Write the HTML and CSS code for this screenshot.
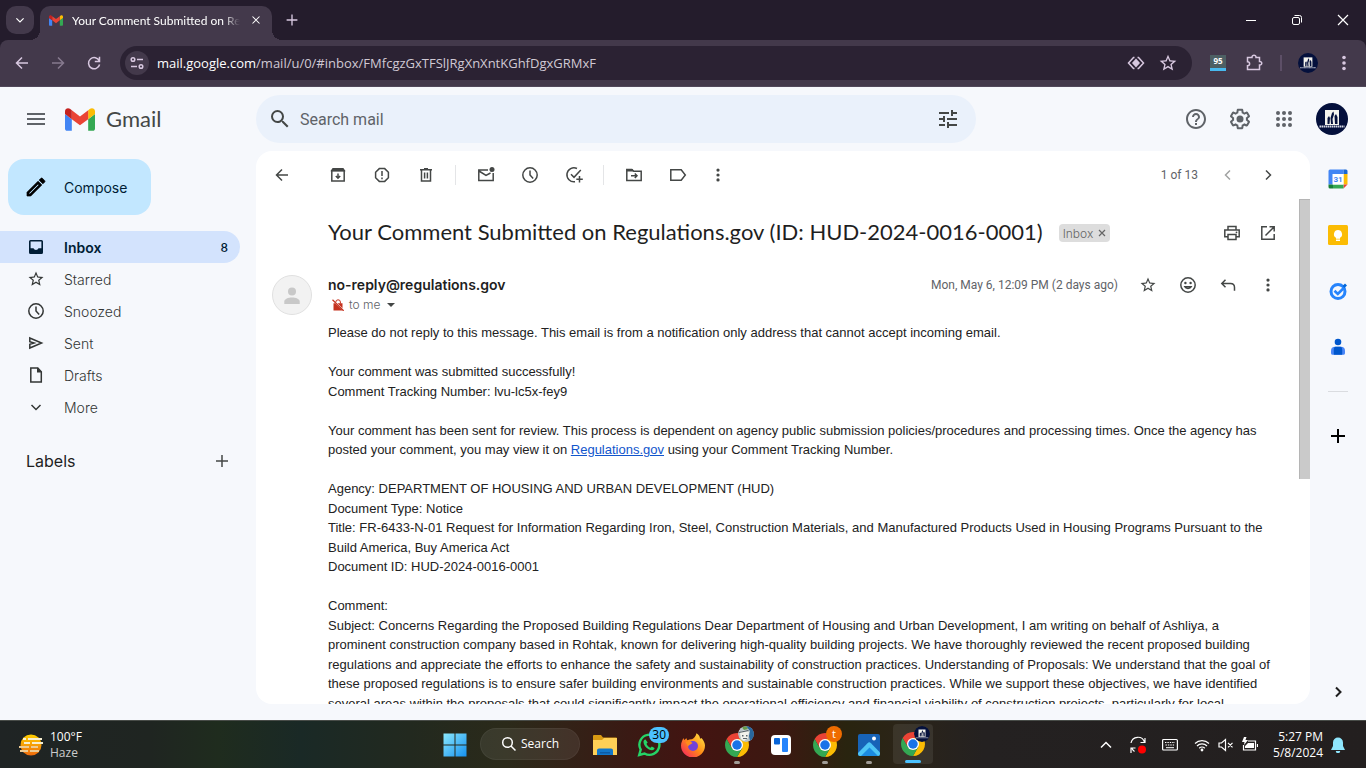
FILE: index.html
```html
<!DOCTYPE html>
<html lang="en">
<head>
<meta charset="utf-8">
<title>Your Comment Submitted on Regulations.gov - Gmail</title>
<link rel="stylesheet" href="styles.css">
</head>
<body>
<svg class="defs" aria-hidden="true">
  <symbol id="gmail" viewBox="52 42 88 66">
    <path fill="#4285f4" d="M58 108h14V74L52 59v43c0 3.32 2.69 6 6 6"/>
    <path fill="#34a853" d="M120 108h14c3.32 0 6-2.69 6-6V59l-20 15"/>
    <path fill="#fbbc04" d="M120 48v26l20-15v-8c0-7.42-8.47-11.65-14.4-7.2"/>
    <path fill="#ea4335" d="M72 74V48l24 18 24-18v26L96 92"/>
    <path fill="#c5221f" d="M52 51v8l20 15V48l-5.6-4.2c-5.94-4.45-14.4-.22-14.4 7.2"/>
  </symbol>
  <symbol id="star" viewBox="0 0 24 24"><path d="M22 9.24l-7.19-.62L12 2 9.19 8.63 2 9.24l5.46 4.73L5.82 21 12 17.27 18.18 21l-1.63-7.03L22 9.24zM12 15.4l-3.76 2.27 1-4.28-3.32-2.88 4.38-.38L12 6.1l1.71 4.04 4.38.38-3.32 2.88 1 4.28L12 15.4z"/></symbol>
  <symbol id="clock" viewBox="0 0 20 20"><g class="ln"><circle cx="10" cy="10" r="7.2"/><path d="M10 5.5V10l3.2 3.4"/></g></symbol>
  <symbol id="dots" viewBox="0 0 20 20"><circle cx="10" cy="4.500" r="1.800"/><circle cx="10" cy="10" r="1.800"/><circle cx="10" cy="15.500" r="1.800"/></symbol>
  <symbol id="back" viewBox="0 0 20 20"><path class="ln" d="M16 10H5M10 4.5L4.5 10l5.500 5.500"/></symbol>
  <symbol id="left" viewBox="0 0 20 20"><path class="ln" d="M12 5.500L7.500 10l4.500 4.500"/></symbol>
  <symbol id="right" viewBox="0 0 20 20"><path class="ln" d="M8 5.500l4.500 4.500L8 14.500"/></symbol>
  <symbol id="down" viewBox="0 0 20 20"><path class="ln" d="M5.500 8l4.500 4.500L14.500 8"/></symbol>
  <symbol id="plus" viewBox="0 0 20 20"><path class="ln" d="M10 4v12M4 10h12"/></symbol>
  <symbol id="close" viewBox="0 0 20 20"><path class="ln" d="M5 5l10 10M15 5L5 15"/></symbol>
  <symbol id="brand" viewBox="0 0 32 32">
    <circle cx="16" cy="16" r="16" fill="#04103c"/>
    <path fill="#f4f4ee" d="M9 7h14v15H9z"/>
    <path fill="#04103c" d="M11.500 21v-6l1.500-2 1 2-.5 6zM15 21l-.5-6 1.500-5 1.500-1.500.5 3-1.500 4.500.5 5zM19 21l-.5-8 1.500-2 1.500 3v7z"/>
    <path d="M3.500 23.500h25" stroke="#d5d8e4" stroke-width="1.800" stroke-dasharray="1.500 .5"/>
  </symbol>
  <symbol id="chrome" viewBox="0 0 48 48">
    <path fill="#ea4335" d="M3.220 12a24 24 0 0 1 41.560 0H24L13.600 30z"/>
    <path fill="#fbbc04" d="M44.780 12A24 24 0 0 1 24 48l10.400-18L24 12z"/>
    <path fill="#34a853" d="M24 48A24 24 0 0 1 3.220 12L13.600 30 24 36l10.400-6z"/>
    <circle cx="24" cy="24" r="12" fill="#fff"/><circle cx="24" cy="24" r="9.500" fill="#1a73e8"/>
  </symbol>
</svg>

<header class="browser">
  <div class="tabstrip">
    <button class="tab-search" aria-label="Search tabs"><svg class="i16 bold"><use href="#down"/></svg></button>
    <div class="tab">
      <svg class="tab-icon"><use href="#gmail"/></svg>
      <span class="tab-title">Your Comment Submitted on Regulations.gov</span>
      <button aria-label="Close tab"><svg class="i14"><use href="#close"/></svg></button>
    </div>
    <button class="new-tab" aria-label="New tab"><svg class="i18"><use href="#plus"/></svg></button>
    <div class="window-controls">
      <button aria-label="Minimize"><svg class="i12" viewBox="0 0 12 12"><path d="M1 6.500h10" stroke="#fff"/></svg></button>
      <button aria-label="Restore"><svg class="i12" viewBox="0 0 12 12"><g fill="none" stroke="#fff"><rect x="1.500" y="3.500" width="7" height="7" rx="1.500"/><path d="M3.500 1.500H8.500a2 2 0 0 1 2 2v5"/></g></svg></button>
      <button aria-label="Close"><svg class="i12" viewBox="0 0 12 12"><path fill="none" stroke="#fff" stroke-width="1.200" d="M1 1l10 10M11 1L1 11"/></svg></button>
    </div>
  </div>
  <div class="toolbar">
    <button aria-label="Back"><svg class="i20"><use href="#back"/></svg></button>
    <button class="dim" aria-label="Forward"><svg class="i20 flip"><use href="#back"/></svg></button>
    <button aria-label="Reload"><svg class="i20" viewBox="0 0 20 20"><path class="ln" d="M15.300 8A5.600 5.600 0 1 0 15.600 11.500M15.500 3.800v4.700h-4.700"/></svg></button>
    <div class="omnibox">
      <button class="site-info" aria-label="Site information"><svg class="i16" viewBox="0 0 16 16"><g class="ln"><circle cx="4" cy="4.500" r="1.800"/><path d="M8 4.500h6M2 11.500h6"/><circle cx="12" cy="11.500" r="1.800"/></g></svg></button>
      <p class="url"><b>mail.google.com</b>/mail/u/0/#inbox/FMfcgzGxTFSlJRgXnXntKGhfDgxGRMxF</p>
      <button aria-label="Reading mode"><svg class="i18" viewBox="0 0 18 18"><path d="M9 4.500l4 4.500-4 4.500L5 9z"/><path class="ln" d="M7.500 3.500h-1L1.500 9l5 5.500h1M10.500 3.500h1l5 5.500-5 5.500h-1"/></svg></button>
      <button aria-label="Bookmark"><svg class="i20"><use href="#star"/></svg></button>
    </div>
    <button class="ext" aria-label="Extension"><span class="score">95</span></button>
    <button class="ext-menu" aria-label="Extensions"><svg class="i20" viewBox="0 0 20 20"><path class="ln" d="M4.500 4.500h3.500c-.3-3 4.300-3 4 0h3.500v4c3-.3 3 3.800 0 3.500v4.500h-12v-3.800c2.800 0 2.800-4 0-4V4.500z"/></svg></button>
    <span class="sep"></span>
    <button class="profile" aria-label="Profile"><svg class="i20"><use href="#brand"/></svg></button>
    <button class="menu" aria-label="Chrome menu"><svg class="i20"><use href="#dots"/></svg></button>
  </div>
</header>

<div class="app">
  <header class="topbar">
    <div class="logo-area">
      <button aria-label="Main menu"><svg class="i24" viewBox="0 0 24 24"><path d="M3 18h18v-2H3v2zm0-5h18v-2H3v2zm0-7v2h18V6H3z"/></svg></button>
      <a class="logo" href="#"><svg class="gmail-logo"><use href="#gmail"/></svg>Gmail</a>
    </div>
    <form class="search">
      <button type="button" aria-label="Search"><svg class="i24" viewBox="0 0 24 24"><path d="M15.500 14h-.79l-.28-.27A6.471 6.471 0 0 0 16 9.500 6.500 6.500 0 1 0 9.500 16c1.610 0 3.090-.59 4.230-1.570l.27.28v.79l5 4.990L20.490 19l-4.990-5zm-6 0C7.010 14 5 11.990 5 9.500S7.010 5 9.500 5 14 7.010 14 9.500 11.990 14 9.500 14z"/></svg></button>
      <input type="text" placeholder="Search mail" aria-label="Search mail">
      <button type="button" aria-label="Search options"><svg class="i24" viewBox="0 0 24 24"><path d="M3 17v2h6v-2H3zM3 5v2h10V5H3zm10 16v-2h8v-2h-8v-2h-2v6h2zM7 9v2H3v2h4v2h2V9H7zm14 4v-2H11v2h10zm-6-4h2V7h4V5h-4V3h-2v6z"/></svg></button>
    </form>
    <div class="account">
      <button aria-label="Support"><svg class="i24" viewBox="0 0 24 24"><path d="M11 18h2v-2h-2v2zm1-16C6.480 2 2 6.480 2 12s4.480 10 10 10 10-4.480 10-10S17.520 2 12 2zm0 18c-4.410 0-8-3.590-8-8s3.590-8 8-8 8 3.590 8 8-3.590 8-8 8zm0-14c-2.210 0-4 1.790-4 4h2c0-1.100.9-2 2-2s2 .9 2 2c0 2-3 1.750-3 5h2c0-2.250 3-2.500 3-5 0-2.210-1.790-4-4-4z"/></svg></button>
      <button aria-label="Settings"><svg class="i24" viewBox="0 0 24 24"><path d="M13.850 22.250h-3.700c-.74 0-1.360-.54-1.450-1.270l-.27-1.890c-.27-.14-.53-.29-.79-.46l-1.800.72c-.7.26-1.470-.03-1.810-.65L2.200 15.530c-.35-.66-.2-1.440.36-1.880l1.530-1.190c-.01-.15-.02-.3-.02-.46 0-.15.01-.31.02-.46l-1.520-1.190c-.59-.45-.74-1.260-.37-1.880l1.850-3.190c.34-.62 1.110-.9 1.790-.63l1.810.73c.26-.17.52-.32.78-.46l.27-1.910c.09-.7.71-1.250 1.440-1.250h3.700c.74 0 1.360.54 1.450 1.270l.27 1.890c.27.14.53.29.79.46l1.800-.72c.71-.26 1.480.03 1.820.65l1.840 3.180c.36.66.2 1.440-.36 1.880l-1.520 1.190c.01.15.02.3.02.46s-.01.31-.02.46l1.520 1.190c.56.45.72 1.230.37 1.860l-1.860 3.220c-.34.62-1.110.9-1.800.63l-1.800-.72c-.26.17-.52.32-.78.46l-.27 1.910c-.1.68-.72 1.220-1.460 1.220zm-3.230-2h2.760l.37-2.550.53-.22c.44-.18.88-.44 1.340-.78l.45-.34 2.380.96 1.380-2.400-2.030-1.580.07-.56c.03-.26.06-.51.06-.78s-.03-.53-.06-.78l-.07-.56 2.030-1.580-1.390-2.400-2.390.96-.45-.35c-.42-.32-.87-.58-1.330-.77l-.52-.22-.37-2.550h-2.760l-.37 2.550-.53.21c-.44.19-.88.44-1.340.79l-.45.33-2.380-.95-1.390 2.390 2.030 1.580-.07.56a7 7 0 0 0-.06.79c0 .26.02.53.06.78l.07.56-2.030 1.580 1.380 2.400 2.390-.96.45.35c.43.33.86.58 1.330.77l.53.22.38 2.550z"/><circle cx="12" cy="12" r="3.500"/></svg></button>
      <button aria-label="Google apps"><svg class="i24" viewBox="0 0 24 24"><circle cx="6" cy="6" r="2"/><circle cx="12" cy="6" r="2"/><circle cx="18" cy="6" r="2"/><circle cx="6" cy="12" r="2"/><circle cx="12" cy="12" r="2"/><circle cx="18" cy="12" r="2"/><circle cx="6" cy="18" r="2"/><circle cx="12" cy="18" r="2"/><circle cx="18" cy="18" r="2"/></svg></button>
      <button class="avatar-btn" aria-label="Google Account"><svg class="i32"><use href="#brand"/></svg></button>
    </div>
  </header>

  <div class="columns">
    <aside class="sidebar">
      <button class="compose"><svg class="i24" viewBox="0 0 24 24"><path fill="#000" d="M14.060 9.020l.92.92L5.920 19H5v-.92l9.060-9.060M17.660 3c-.25 0-.51.1-.7.29l-1.830 1.830 3.750 3.750 1.830-1.830c.39-.39.39-1.020 0-1.410l-2.340-2.340c-.2-.2-.45-.29-.71-.29zm-3.600 3.190L3 17.250V21h3.750L17.810 9.940l-3.750-3.750z" stroke="#000" stroke-width=".7"/></svg>Compose</button>
      <nav>
        <a class="active" href="#"><svg class="i20" viewBox="0 0 20 20"><path fill-rule="evenodd" d="M4.500 3h11A1.500 1.500 0 0 1 17 4.500v11a1.500 1.500 0 0 1-1.500 1.500h-11A1.500 1.500 0 0 1 3 15.500v-11A1.500 1.500 0 0 1 4.500 3zm.1 1.600V11.300h3c.4 1 1.300 1.600 2.400 1.600s2-.6 2.400-1.600h3V4.600z"/></svg><span>Inbox</span><b>8</b></a>
        <a href="#"><svg class="i18"><use href="#star"/></svg><span>Starred</span></a>
        <a href="#"><svg class="i20"><use href="#clock"/></svg><span>Snoozed</span></a>
        <a href="#"><svg class="i20" viewBox="0 0 20 20"><path class="ln" d="M3.800 5l11.800 5L3.800 15v-3.800L8 10 3.800 8.800z"/></svg><span>Sent</span></a>
        <a href="#"><svg class="i20" viewBox="0 0 20 20"><path class="ln" d="M4.800 3h7L15.300 6.800V17H4.800z"/><path d="M11 2.500V7.500h5z"/></svg><span>Drafts</span></a>
        <a href="#"><svg class="i20"><use href="#down"/></svg><span>More</span></a>
      </nav>
      <div class="labels"><h2>Labels</h2><button aria-label="Create new label"><svg class="i20"><use href="#plus"/></svg></button></div>
    </aside>

    <main class="pane">
      <div class="actions">
        <button class="go-back" aria-label="Back to Inbox"><svg class="i20"><use href="#back"/></svg></button>
        <button aria-label="Archive"><svg class="i20" viewBox="0 0 20 20"><path class="ln" d="M3.800 5.500V16h12.400V5.500M3.800 5.500L5 3.800h10l1.200 1.700zM10 8.500v4.500M7.800 11l2.200 2.200 2.200-2.200"/><path d="M4 4h12v2.500H4z"/></svg></button>
        <button aria-label="Report spam"><svg class="i20" viewBox="0 0 20 20"><path class="ln" d="M7.300 3.600h5.400l3.700 3.700v5.400l-3.700 3.700H7.300l-3.700-3.700V7.300zM10 6v5M10 12.600v1.600"/></svg></button>
        <button aria-label="Delete"><svg class="i20" viewBox="0 0 20 20"><path class="ln" d="M4 4.800h12M8 3.800h4M5.500 5v11h9V5M8.600 7.500v6M11.400 7.500v6"/></svg></button>
        <span class="rule"></span>
        <button aria-label="Mark as unread"><svg class="i20" viewBox="0 0 20 20"><path class="ln" d="M12 5H2.800v10.500h14.400V8M3 6l7 4.500L14.500 8"/><circle cx="16" cy="4.500" r="2.500"/></svg></button>
        <button aria-label="Snooze"><svg class="i20"><use href="#clock"/></svg></button>
        <button aria-label="Add to Tasks"><svg class="i20" viewBox="0 0 20 20"><path class="ln" d="M11 16.700A7 7 0 1 1 13 3.500M7 9.300l3 3 6.800-7.300M15.500 11v6.500M12.300 14.200h6.500"/></svg></button>
        <span class="rule"></span>
        <button aria-label="Move to"><svg class="i20" viewBox="0 0 20 20"><path class="ln" d="M2.800 4.500h5l2 1.800h7.400V15.500H2.800zM7 10.800h6M10.800 8.500l2.200 2.300-2.200 2.300"/><path d="M2.500 4h6l1.500 2.500H2.500z"/></svg></button>
        <button aria-label="Labels"><svg class="i20" viewBox="0 0 20 20"><path class="ln" d="M2.800 4.800h10.400L17.300 10l-4.100 5.200H2.800z"/></svg></button>
        <button class="more" aria-label="More"><svg class="i18"><use href="#dots"/></svg></button>
        <span class="count">1 of 13</span>
        <button class="page dim" aria-label="Newer"><svg class="i20"><use href="#left"/></svg></button>
        <button class="page" aria-label="Older"><svg class="i20 bold-icon"><use href="#right"/></svg></button>
      </div>

      <div class="scroll">
        <article class="thread">
          <div class="subject">
            <h1>Your Comment Submitted on Regulations.gov (ID: HUD-2024-0016-0001)</h1>
            <button class="chip" aria-label="Remove label Inbox">Inbox<svg class="i12" viewBox="0 0 12 12"><path class="ln thin" d="M3 3l6 6M9 3L3 9"/></svg></button>
            <div class="subject-tools">
              <button aria-label="Print all"><svg class="i20" viewBox="0 0 20 20"><path class="ln" d="M6 7V3.500h8V7M5.500 13.800H2.800V7h14.400v6.800h-2.700M6 11.500h8v5H6z"/><circle cx="14.500" cy="9.300" r=".9"/></svg></button>
              <button aria-label="In new window"><svg class="i20" viewBox="0 0 20 20"><path class="ln" d="M9 3.800H3.800v12.400h12.400V11M11.500 3.800h4.700v4.700M16 4L7.500 12.500"/></svg></button>
            </div>
          </div>
          <header class="message-head">
            <svg class="sender-pic" viewBox="0 0 40 40"><circle cx="20" cy="20" r="19.500" fill="#f2f2f2" stroke="#e0e0e0"/><circle cx="20" cy="16.500" r="4" fill="#c8c8c8"/><path d="M12.300 29v-2.500c0-2.500 4-4 7.700-4s7.700 1.500 7.700 4V29z" fill="#c8c8c8"/></svg>
            <div class="who">
              <h3>no-reply@regulations.gov</h3>
              <p><svg class="lock" viewBox="0 0 12 12"><path fill="#c5321f" d="M1.500 4.200H3l8 7.300H1.500zM5.500 4.200h5v5z"/><path d="M3.800 3.200a2.300 2.300 0 0 1 4.600-.2v1.500" fill="none" stroke="#c5321f"/><path d="M.5.800L11.700 11.800" stroke="#c5321f" stroke-width="1.200"/></svg>to me<svg class="caret" viewBox="0 0 8 4"><path d="M0 0h8L4 4z"/></svg></p>
            </div>
            <time>Mon, May 6, 12:09 PM (2 days ago)</time>
            <button aria-label="Star"><svg class="i18"><use href="#star"/></svg></button>
            <button aria-label="Add reaction"><svg class="i20" viewBox="0 0 20 20"><g class="ln"><circle cx="10" cy="10" r="7.200"/><path d="M6.800 11.800h6.400c-1 2.200-5.400 2.200-6.400 0z"/></g><circle cx="7.400" cy="8" r="1.200"/><circle cx="12.600" cy="8" r="1.200"/></svg></button>
            <button aria-label="Reply"><svg class="i20" viewBox="0 0 20 20"><path class="ln" d="M7.500 4.800L3.800 8.500l3.700 3.700M4 8.500h8.500c2.500 0 4 1.500 4 4v3.200"/></svg></button>
            <button aria-label="More"><svg class="i18"><use href="#dots"/></svg></button>
          </header>
          <div class="body">
            <p>Please do not reply to this message. This email is from a notification only address that cannot accept incoming email.</p>
            <p>Your comment was submitted successfully!<br>Comment Tracking Number: lvu-lc5x-fey9</p>
            <p>Your comment has been sent for review. This process is dependent on agency public submission policies/procedures and processing times. Once the agency has posted your comment, you may view it on <a href="#">Regulations.gov</a> using your Comment Tracking Number.</p>
            <p>Agency: DEPARTMENT OF HOUSING AND URBAN DEVELOPMENT (HUD)<br>Document Type: Notice<br>Title: FR-6433-N-01 Request for Information Regarding Iron, Steel, Construction Materials, and Manufactured Products Used in Housing Programs Pursuant to the Build America, Buy America Act<br>Document ID: HUD-2024-0016-0001</p>
            <p>Comment:<br>Subject: Concerns Regarding the Proposed Building Regulations Dear Department of Housing and Urban Development, I am writing on behalf of Ashliya, a prominent construction company based in Rohtak, known for delivering high-quality building projects. We have thoroughly reviewed the recent proposed building regulations and appreciate the efforts to enhance the safety and sustainability of construction practices. Understanding of Proposals: We understand that the goal of these proposed regulations is to ensure safer building environments and sustainable construction practices. While we support these objectives, we have identified several areas within the proposals that could significantly impact the operational efficiency and financial viability of construction projects, particularly for local</p>
          </div>
        </article>
        <div class="track"><div class="thumb"></div></div>
      </div>
    </main>

    <aside class="rail">
      <button aria-label="Calendar"><svg class="i20" viewBox="0 0 20 20"><path fill="#4285f4" d="M2 .5h13.500V5H5v10.500H.5V2A1.500 1.500 0 0 1 2 .5z"/><path fill="#1967d2" d="M15.500.5H18A1.500 1.500 0 0 1 19.500 2v3h-4z"/><path fill="#fbbc04" d="M15.500 5h4v10.500h-4z"/><path fill="#ea4335" d="M15.500 15.500h4l-4 4z"/><path fill="#34a853" d="M5 15.500h10.500v4H5z"/><path fill="#188038" d="M.5 15.500H5v4H2A1.500 1.500 0 0 1 .5 18z"/><path fill="#fff" d="M4.500 5h11v10.500h-11z"/><text x="10" y="13" text-anchor="middle" class="day">31</text></svg></button>
      <button aria-label="Keep"><svg class="i20" viewBox="0 0 20 20"><rect width="20" height="20" rx="1.500" fill="#fbbc04"/><path fill="#fff" d="M10 5a4.200 4.200 0 0 0-2 7.800v1h4v-1A4.200 4.200 0 0 0 10 5zM8 14.500h4V16H8z"/></svg></button>
      <button aria-label="Tasks"><svg class="i20" viewBox="0 0 20 20"><circle cx="10" cy="10.500" r="7" fill="none" stroke="#2684fc" stroke-width="3"/><path d="M6.500 9.800l3.300 3.200 6-6" fill="none" stroke="#2684fc" stroke-width="2.600"/><path d="M14.500 5L17 2.500l2 2L16.500 7z" fill="#0066da"/></svg></button>
      <button aria-label="Contacts"><svg class="i20" viewBox="0 0 20 20"><circle cx="10" cy="5" r="3.300" fill="#0057cc"/><path fill="#4a86f7" d="M7 9.800h6c2.500 0 4 1.600 4 4V16c0 1-.6 1.800-1.500 1.800h-11C3.600 17.800 3 17 3 16v-2.200c0-2.400 1.500-4 4-4z"/><path fill="#0057cc" d="M7.500 9.800h5c1 0 1.700 1.200 1.700 3v5H5.800v-5c0-1.800.7-3 1.700-3z"/></svg></button>
      <hr>
      <button class="black" aria-label="Get add-ons"><svg class="i22" viewBox="0 0 22 22"><path d="M11 4v14M4 11h14" stroke="#000" stroke-width="2"/></svg></button>
      <button class="hide black" aria-label="Hide side panel"><svg class="i20" viewBox="0 0 20 20"><path d="M8 5.500l4.500 4.500L8 14.500" fill="none" stroke="#1f1f1f" stroke-width="2"/></svg></button>
    </aside>
  </div>
</div>

<footer class="taskbar">
  <button class="weather">
    <svg class="i24" viewBox="0 0 24 24"><defs><linearGradient id="sun" x2="0" y2="1"><stop stop-color="#ffd000"/><stop offset="1" stop-color="#ee6a0c"/></linearGradient></defs><circle cx="12" cy="12" r="10.500" fill="url(#sun)"/><path d="M4 6h3M9 6h14M5 10h6M13 10h11" stroke="#f7efd0" stroke-width="2"/><path d="M0 14h10M12 14h7M1 18h8M11 18h9" stroke="#ecca94" stroke-width="2"/></svg>
    <span>100°F<br><small>Haze</small></span>
  </button>
  <div class="dock">
    <button aria-label="Start"><svg class="i24" viewBox="0 0 24 24"><defs><linearGradient id="win" x2="1" y2="1"><stop stop-color="#8be8fd"/><stop offset="1" stop-color="#1591f0"/></linearGradient></defs><path fill="url(#win)" d="M.5.500h11v11H.5zM12.500.5h11v11h-11zM.5 12.500h11v11H.5zM12.500 12.500h11v11h-11z"/></svg></button>
    <button class="find"><svg class="i16" viewBox="0 0 16 16"><g class="ln"><circle cx="6.500" cy="6.500" r="4.800"/><path d="M10 10l4.500 4.500"/></g></svg>Search</button>
    <button aria-label="File Explorer"><svg class="i24" viewBox="0 0 24 24"><path fill="#d99a13" d="M0 3a1 1 0 0 1 1-1h7l2 2.500h13a1 1 0 0 1 1 1V9H0z"/><path fill="#ffd057" d="M0 7h9l2-2h13v17H0z"/><path fill="#1277ca" d="M4 22v-4.500c0-1.200.8-2 2-2h12c1.200 0 2 .8 2 2V22z"/><path fill="#0d5ba5" d="M7 19h10v1.500H7z"/></svg></button>
    <button aria-label="WhatsApp"><svg class="i24" viewBox="0 0 24 24"><path d="M2.200 22l1.500-5.300A10 10 0 1 1 7.500 20.500z" fill="none" stroke="#25d366" stroke-width="2.400"/><path fill="#25d366" d="M8.500 6.500c-.8-.3-2 .8-2 2.300 0 4 4.500 8.500 8.500 8.500 1.500 0 2.800-1 2.500-2.200L14.800 13.600l-1.300 1.200c-1.500-.4-3.600-2.400-4-4l1.200-1.200z"/></svg><span class="count-badge">30</span></button>
    <button aria-label="Firefox"><svg class="i24" viewBox="0 0 24 24"><defs><linearGradient id="fox" x1="1" x2="0" y2="1"><stop stop-color="#fff04a"/><stop offset=".5" stop-color="#ff8a16"/><stop offset="1" stop-color="#f5156c"/></linearGradient></defs><path fill="url(#fox)" d="M2.500 5c.2.900.5 1.500 1 2l2-2c0 1 .4 1.800 1 2.200C8 6.500 9.500 6 11 6.200c1.500-1 3.800-2.500 4.500-6C18 1.500 19 4 19 5.500c.7 0 1.200-.2 1.500-.6C22.500 7 24 10 24 12.500A12 12 0 0 1 0 12.500C0 9.500 1.500 7 2.500 5z"/><circle cx="12" cy="13" r="5" fill="#7142d9"/><path fill="#ff8d1a" d="M4.500 9c3-1.500 5-1 7 1-1 1-3.500 1.500-4.500 3.500z"/></svg></button>
    <button class="running" aria-label="Chrome, profile 1"><svg class="i24"><use href="#chrome"/></svg><svg class="badge" viewBox="0 0 16 16"><circle cx="8" cy="8" r="8" fill="#b8c4c8"/><path fill="#28679e" d="M8 0a8 8 0 0 1 4 15l-1-5 1-5z"/><path fill="#f2f2ec" d="M2 7c2-3 6-3 9-1l-1 6-4 3-3-2z"/><path fill="#59646a" d="M1 6l9-2 1 1-10 2zM4 9h1.500v1.500H4zM8 9h1.500v1.500H8zM5 12h4v1H5z"/><path fill="#689a4a" d="M4 1.500L8 0l2 3-4 1z"/></svg></button>
    <button aria-label="Trello"><svg class="i20" viewBox="0 0 20 20"><rect width="20" height="20" rx="4" fill="#fff"/><rect x="3" y="3" width="6" height="6.500" rx="1" fill="#0764d8"/><rect x="11" y="3" width="6" height="14" rx="1" fill="#2684fc"/></svg></button>
    <button class="running" aria-label="Chrome, profile 2"><svg class="i24"><use href="#chrome"/></svg><span class="badge letter">t</span></button>
    <button class="running" aria-label="Photos"><svg class="i22" viewBox="0 0 22 22"><rect width="22" height="22" rx="2" fill="#1763b7"/><path fill="#4dc5f5" d="M0 19L9.500 9.200c1.200-1.200 2.300-1.200 3.500 0L22 18.500V20a2 2 0 0 1-2 2H2a2 2 0 0 1-2-2z"/><path fill="#1b8be0" d="M3 22l8.500-8.500L20 22z"/><circle cx="16" cy="4.500" r="2" fill="#fff"/></svg></button>
    <button class="running current" aria-label="Chrome, profile 3"><svg class="i24"><use href="#chrome"/></svg><svg class="badge"><use href="#brand"/></svg></button>
  </div>
  <div class="tray">
    <button aria-label="Show hidden icons"><svg class="i16" viewBox="0 0 16 16"><path class="ln" d="M3 10.500l5-5 5 5"/></svg></button>
    <button aria-label="Update"><svg class="i20" viewBox="0 0 20 20"><path class="ln thin" d="M3 8a7 7 0 0 1 13.500-1M17 3v4.500h-4.500M6.500 16.500A7 7 0 0 1 4 13.500M3 18v-5h4.500"/><circle cx="14" cy="14.500" r="4" fill="red"/></svg></button>
    <button class="keyboard" aria-label="Touch keyboard"><svg class="i16" viewBox="0 0 16 16"><rect class="ln thin" x=".6" y="2.500" width="14.800" height="10.500" rx="1"/><path d="M3 5.500h10M3.500 8h9" fill="none" stroke="#fff" stroke-width="1.200" stroke-dasharray="1.400 1"/><path d="M4 10.700h8" stroke="#fff"/></svg></button>
    <button class="status" aria-label="Network, volume and battery">
      <svg class="i16" viewBox="0 0 16 16"><path class="ln thin" d="M1 6.500a10 10 0 0 1 14 0M3 9a7 7 0 0 1 10 0M5.200 11.300a4 4 0 0 1 5.600 0"/><circle cx="8" cy="13" r="1.400"/></svg>
      <svg class="i16" viewBox="0 0 16 16"><path class="ln thin" d="M1 6h2.500L7.500 2.500v11L3.500 10H1zM10 5.800l4.500 4.500M14.500 5.800L10 10.300"/></svg>
      <svg class="i16" viewBox="0 0 16 16"><path class="ln thin" d="M6 4h7.500v9H1.500V8M15.500 7v3"/><path d="M6 6h6v5H3V9zM2 0L0 5h2.500L2 8l4-5H3.500l1-3z"/></svg>
    </button>
    <button class="datetime"><time>5:27 PM<br>5/8/2024</time><svg class="i16" viewBox="0 0 16 16"><path fill="#8fe6fd" d="M8 .5a5 5 0 0 1 5 5V9l2 4H1l2-4V5.500a5 5 0 0 1 5-5zM5.800 14h4.400a2.200 2.200 0 0 1-4.400 0z"/></svg></button>
  </div>
</footer>
</body>
</html>
```
FILE: styles.css
```css
* { box-sizing: border-box; }
body, h1, h2, h3, p, form, hr { margin: 0; }
body {
  height: 100vh;
  display: flex;
  flex-direction: column;
  overflow: hidden;
  background: #f6f8fc;
  color: #1f1f1f;
  font-family: Inter, Roboto, sans-serif;
}
button {
  display: flex;
  align-items: center;
  justify-content: center;
  flex: none;
  padding: 0;
  border: 0;
  background: none;
  color: inherit;
  font: inherit;
}
a { color: inherit; text-decoration: none; }
svg { flex: none; fill: currentColor; }
.defs { position: absolute; width: 0; height: 0; }
.ln { fill: none; stroke: currentColor; stroke-width: 1.5; }
.thin { stroke-width: 1.2; }
.i12 { width: 12px; height: 12px; }
.i14 { width: 14px; height: 14px; }
.i16 { width: 16px; height: 16px; }
.i18 { width: 18px; height: 18px; }
.i20 { width: 20px; height: 20px; }
.i22 { width: 22px; height: 22px; }
.i24 { width: 24px; height: 24px; }
.i32 { width: 32px; height: 32px; }
.flip { transform: scaleX(-1); }

/* Browser frame */
.browser { flex: none; background: #241c2c; color: #d8c8e0; font-family: "Open Sans", "Noto Sans", sans-serif; }
.tabstrip { display: flex; height: 40px; padding-left: 6px; }
.tab-search { width: 28px; height: 28px; margin-top: 6px; border-radius: 10px; background: #43394b; color: #fff; }
.tab {
  position: relative;
  display: flex;
  align-items: center;
  width: 232px;
  height: 34px;
  margin: 6px 0 0 6px;
  padding: 0 9px 6px;
  border-radius: 10px 10px 0 0;
  background: #43394b;
  color: #fff;
}
.tab::before, .tab::after { content: ""; position: absolute; bottom: 0; width: 10px; height: 10px; }
.tab::before { left: -10px; background: radial-gradient(circle at 0 0, transparent 10px, #43394b 10px); }
.tab::after { right: -10px; background: radial-gradient(circle at 100% 0, transparent 10px, #43394b 10px); }
.tab-icon { width: 14px; height: 11px; margin-right: 9px; }
.tab-title {
  flex: 1;
  overflow: hidden;
  white-space: nowrap;
  font-family: Lato, sans-serif;
  font-size: 12px;
  -webkit-mask-image: linear-gradient(90deg, #000 90%, transparent);
  mask-image: linear-gradient(90deg, #000 90%, transparent);
}
.tab button { margin-left: 9px; }
.new-tab { width: 28px; height: 28px; margin: 6px 0 0 6px; }
.window-controls { display: flex; margin-left: auto; }
.window-controls button { width: 46px; }
.toolbar { display: flex; align-items: center; height: 47px; padding: 0 4px; border-radius: 8px 8px 0 0; background: #43394b; border-bottom: 1px solid #51485a; }
.toolbar > button { width: 36px; height: 34px; }
.toolbar .dim { opacity: 0.45; }
.omnibox { display: flex; flex: 1; align-items: center; height: 34px; margin-left: 8px; padding: 0 8px 0 5px; border-radius: 17px; background: #2b2233; }
.omnibox > button { width: 32px; }
.omnibox .site-info { width: 24px; height: 24px; border-radius: 12px; background: #43394b; }
.url { flex: 1; padding-left: 8px; color: #d0c9d4; font-size: 13px; white-space: nowrap; }
.url b { color: #fff; font-weight: 400; }
.toolbar .ext { margin-left: 8px; }
.score { width: 16px; height: 16px; background: #4d6064; border-bottom: 3px solid #48b9ee; color: #fff; font-size: 8px; font-weight: 700; line-height: 12px; }
.sep { width: 2px; height: 16px; margin: 0 8px; background: #5d4f67; }

/* App shell */
.app { display: flex; flex: 1; flex-direction: column; min-height: 0; }
.topbar { display: flex; align-items: center; flex: none; height: 64px; color: #5f6368; }
.logo-area { display: flex; align-items: center; flex: none; width: 256px; padding-left: 12px; }
.logo-area button { width: 48px; height: 48px; }
.logo { display: flex; align-items: center; gap: 11px; margin-left: 5px; color: #444746; font-family: Lato, sans-serif; font-size: 22px; line-height: 24px; }
.gmail-logo { width: 30px; height: 23px; }
.search { display: flex; align-items: center; flex: 0 1 720px; height: 48px; padding: 0 8px 0 4px; border-radius: 24px; background: #eaf1fb; color: #444746; }
.search button { width: 40px; height: 40px; }
.search input { flex: 1; min-width: 0; padding: 0; border: 0; outline: 0; background: none; font: 16px Roboto, sans-serif; color: inherit; }
.search input::placeholder { color: #5f6368; opacity: 1; }
.account { display: flex; align-items: center; margin-left: auto; padding-right: 14px; }
.account button { width: 44px; height: 44px; }
.account .avatar-btn { width: 40px; margin-left: 6px; }
.columns { display: flex; flex: 1; min-height: 0; padding-bottom: 16px; }

/* Sidebar */
.sidebar { flex: none; width: 256px; padding: 8px 16px 0 0; font-size: 14px; font-weight: 300; }
.compose { height: 56px; margin: 0 0 16px 8px; padding: 0 24px 0 16px; gap: 16px; border-radius: 16px; background: #c2e7ff; color: #001d35; font-weight: 400; }
.sidebar nav a { display: flex; align-items: center; height: 32px; padding: 0 12px 0 26px; border-radius: 0 16px 16px 0; color: #333635; }
.sidebar nav a svg { width: 20px; }
.sidebar nav span { flex: 1; margin-left: 18px; }
.sidebar nav .active { background: #d3e3fd; color: #001d35; font-weight: 600; }
.active b { font-size: 12px; font-weight: 500; }
.labels { display: flex; align-items: center; justify-content: space-between; margin-top: 22px; padding: 0 8px 0 26px; }
.labels h2 { font-size: 16px; font-weight: 400; }
.labels button { width: 20px; height: 32px; color: #444746; }

/* Conversation */
.pane { display: flex; flex: 1; flex-direction: column; min-width: 0; overflow: hidden; border-radius: 16px; background: #fff; color: #444746; }
.actions { display: flex; align-items: center; flex: none; height: 48px; padding: 0 22px 0 4px; }
.actions button { width: 44px; height: 40px; }
.actions .go-back { margin-right: 12px; }
.actions .more { width: 36px; }
.actions .page { width: 40px; }
.actions .dim { opacity: 0.5; }
.rule { width: 1px; height: 20px; margin: 0 8px 0 7px; background: #e4e5e7; }
.count { margin: 0 10px 0 auto; color: #5f6368; font-family: Roboto, sans-serif; font-size: 12px; }
.scroll { display: flex; flex: 1; min-height: 0; overflow: hidden; }
.thread { flex: 1; min-width: 0; padding: 12px 11px 0 16px; }
.track { flex: none; width: 11px; }
.thumb { height: 280px; background: #cacaca; border: solid #b5b5b5; border-width: 1px 0 0 1px; }
.subject { display: flex; align-items: center; height: 44px; padding-left: 56px; }
.subject h1 { padding-bottom: 2px; color: #1f1f1f; font-family: Lato, sans-serif; font-size: 22px; font-weight: 400; line-height: 28px; white-space: nowrap; }
.chip { height: 18px; margin-left: 16px; padding: 0 2px 0 4px; gap: 3px; border-radius: 4px; background: #ddd; color: #666; font-size: 12px; font-weight: 300; }
.subject-tools { display: flex; margin-left: auto; padding-right: 2px; }
.subject-tools button { width: 36px; }
.message-head { display: flex; align-items: center; height: 40px; margin-top: 20px; }
.sender-pic { width: 40px; height: 40px; margin-right: 16px; }
.who { align-self: flex-start; flex: 1; }
.who h3 { color: #1f1f1f; font-size: 14px; font-weight: 600; line-height: 20px; }
.who p { display: flex; align-items: center; color: #5f6368; font-size: 12px; font-weight: 300; line-height: 20px; }
.lock { width: 12px; height: 12px; margin: 0 5px 0 4px; }
.caret { width: 8px; height: 4px; margin-left: 7px; color: #444746; }
.message-head time { align-self: flex-start; margin-right: 10px; color: #5f6368; font-family: Roboto, sans-serif; font-size: 12px; line-height: 20px; white-space: nowrap; }
.message-head button { align-self: flex-start; width: 40px; height: 20px; }
.body { padding: 8px 12px 0 56px; color: #222; font-family: "Liberation Sans", Arial, sans-serif; font-size: 13px; line-height: 1.5; }
.body p { margin-bottom: 1.5em; }
.body a { color: #15c; text-decoration: underline; }

/* Side panel */
.rail { display: flex; flex: none; flex-direction: column; align-items: center; width: 56px; }
.rail button { width: 56px; height: 56px; }
.rail hr { width: 20px; margin: 16px 0; border: 0; border-top: 1px solid #dadce0; }
.day { fill: #4285f4; font: 700 8px Roboto, sans-serif; }
.rail .hide { height: 24px; margin-top: auto; }

/* Taskbar */
.taskbar {
  display: grid;
  grid-template-columns: 1fr auto 1fr;
  flex: none;
  height: 48px;
  border-top: 1px solid #484c48;
  background: linear-gradient(90deg, #1f2424 0%, #1f2521 11%, #1f2c1e 16%, #1a2926 22%, #22291f 30%, #2b2a1a 37%, #3a1a14 46%, #431411 51%, #3c1811 57%, #29240f 62%, #2b2418 66%, #242121 72%, #231f1f 100%);
  color: #fff;
  font-family: "Open Sans", "Noto Sans", sans-serif;
  font-size: 12px;
  line-height: 16px;
}
.weather { justify-self: start; gap: 7px; padding-left: 19px; text-align: left; }
.weather small { color: #ccc; font-size: 12px; }
.dock { display: flex; padding-left: 2px; }
.dock button { position: relative; width: 44px; }
.dock .find { width: 100px; height: 32px; margin: 7px 3px; gap: 4px; border-radius: 16px; background: #ffffff14; border: 1px solid #ffffff0c; }
.badge { position: absolute; top: 5px; right: 5px; width: 16px; height: 16px; border-radius: 8px; }
.letter { background: #ef6c00; font-size: 11px; line-height: 15px; }
.count-badge { position: absolute; top: 6px; right: 2px; padding: 0 3px; border-radius: 8px; background: #4cc2ff; color: #000; }
.running::after { content: ""; position: absolute; bottom: 4px; left: 19px; width: 6px; height: 3px; border-radius: 2px; background: #a09c96; }
.dock .current { width: 40px; height: 40px; margin: 3px 2px; border-radius: 4px; background: #ffffff14; }
.current .badge { right: 3px; top: 2px; }
.current::after { left: 12px; bottom: 1px; width: 16px; background: #4cc2ff; }
.tray { display: flex; justify-self: end; }
.tray button { width: 32px; }
.tray .status { width: 64px; gap: 8px; margin: 0 10px 0 8px; }
.tray .datetime { width: auto; gap: 7px; padding: 0 20px 0 5px; text-align: right; }
```
